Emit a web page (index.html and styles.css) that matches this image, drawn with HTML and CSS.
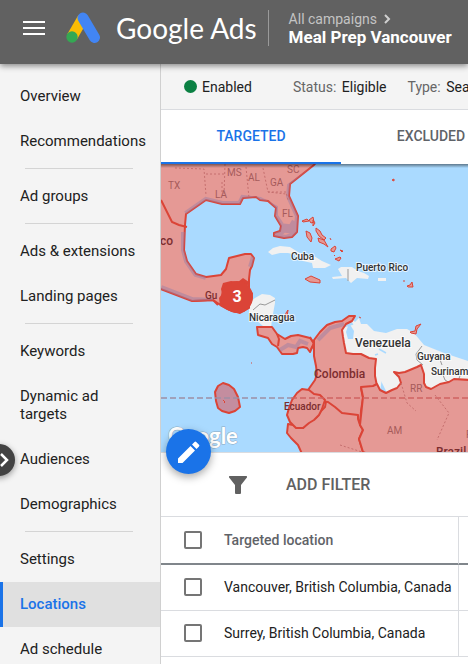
FILE: index.html
```html
<!DOCTYPE html>
<html lang="en">
<head>
  <meta charset="UTF-8" />
  <meta name="viewport" content="width=device-width, initial-scale=1.0" />
  <title>Locations - Google Ads</title>
  <link rel="stylesheet" href="styles.css">
</head>
<body>
  <header class="topbar">
    <button class="menu-btn" type="button" aria-label="Main menu">
      <svg width="22" height="14" viewBox="0 0 22 14"><path d="M0 1h22M0 7h22M0 13h22" stroke="#fff" stroke-width="2"/></svg>
    </button>
    <a class="brand" href="#">
      <svg width="34" height="32" viewBox="0 0 34 32">
        <path d="M17 6L6 25" stroke="#fbbc04" stroke-width="11" />
        <path d="M17 6l11.500 19.500" stroke="#4285f4" stroke-width="11" stroke-linecap="round"/>
        <circle cx="6" cy="25" r="5.700" fill="#34a853"/>
      </svg>
      <span class="brand-name">Google Ads</span>
    </a>
    <div class="crumbs">
      <a class="crumb-parent" href="#">All campaigns
        <svg width="7" height="10" viewBox="0 0 7 10"><path d="M1 1l4 4-4 4" fill="none" stroke="#d0d0d0" stroke-width="2"/></svg>
      </a>
      <strong class="crumb-current">Meal Prep Vancouver</strong>
    </div>
  </header>

  <div class="layout">
    <nav class="sidebar">
      <a href="#">Overview</a>
      <a href="#">Recommendations</a>
      <hr>
      <a href="#">Ad groups</a>
      <hr>
      <a href="#">Ads &amp; extensions</a>
      <a href="#">Landing pages</a>
      <hr>
      <a href="#">Keywords</a>
      <a href="#">Dynamic ad targets</a>
      <a href="#">Audiences</a>
      <a href="#">Demographics</a>
      <hr>
      <a href="#">Settings</a>
      <a href="#" class="active">Locations</a>
      <a href="#">Ad schedule</a>
      <button class="nav-toggle" type="button" aria-label="Expand navigation">
        <svg width="9" height="14" viewBox="0 0 9 14"><path d="M1 1l6 6-6 6" fill="none" stroke="#fff" stroke-width="2.500"/></svg>
      </button>
    </nav>

    <main class="content">
      <div class="status">
        <span class="enabled"><i class="dot"></i>Enabled</span>
        <span class="pair"><span class="key">Status:</span> Eligible</span>
        <span class="pair"><span class="key">Type:</span> Search</span>
      </div>

      <div class="tabs">
        <button class="tab selected" type="button">TARGETED</button>
        <button class="tab" type="button">EXCLUDED</button>
      </div>

      <div class="map-wrap">
        <svg class="map" viewBox="161 164 307 288" preserveAspectRatio="xMinYMin slice">
          <defs>
            <linearGradient id="edge" x1="0" y1="0" x2="0" y2="1">
              <stop offset="0" stop-color="#000" stop-opacity=".45"/>
              <stop offset="1" stop-color="#000" stop-opacity="0"/>
            </linearGradient>
            <clipPath id="north"><path d="M158 160H318L314 165 290 184 289 196 298 216 297 232 292 237 284 238 274 236 274 233 280 231 281 226 275 216 276 208 268 201 260 200 256 197 243 198 240 204 222 204 206 200 186 214 185 225 184 250 187 261 196 274 206 277 221 275 226 269 229 258 245 254 251 254 254 258 252 266 250 270 249 279 249 308 240 313 230 310 219 304 213 300 192 301 158 288Z"/></clipPath>
          </defs>
          <rect x="161" y="164" width="307" height="288" fill="#aadaff"/>

          <!-- land that is not targeted -->
          <g fill="#f1f1f1">
            <path d="M268 252l5-4 7-2 10 1 8 5 9 5 7-1 8 5 9 4-6 3-12 0-1-5-9-2-6-6-9-2-8 0-8 2z"/>
            <path d="M338 269l3-2 11 0 6 4 6 2 5 3-1 3-11-1-6 5-5-5-13 1-1-2 10-1z"/>
            <path d="M378 278h8v3h-8z"/>
            <path d="M249 303l6-5 7-4 8 1 5 3 0 5-3 16-1 9-8-2-14-12z"/>
            <path d="M349 316l6 6 4-4 2 6 6 0 7 7 12 2 11-4 10 0 7 4 10 12 20 8 27 9v25l-82 10z"/>
            <path d="M342 328l14-4 30 26-6 42-40-30z"/>
          </g>
          <path d="M349 323l5 8-1 8-5 0-2-7z" fill="#aadaff"/>
          <path d="M386 353l-7-4M378 354l-3 1" stroke="#aadaff" stroke-width="1.500"/>
          <path d="M253 310l7-6 5 1 10-5M422 346l-6 8 1 6 6 5M439 357l3 8M441 370l4 10 5 3M463 368l-5 13M348 269v12" fill="none" stroke="#999"/>

          <!-- targeted countries -->
          <g class="target">
            <path d="M158 160H318L314 165 290 184 289 196 298 216 297 232 292 237 284 238 274 236 274 233 280 231 281 226 275 216 276 208 268 201 260 200 256 197 243 198 240 204 222 204 206 200 186 214 185 225 184 250 187 261 196 274 206 277 221 275 226 269 229 258 245 254 251 254 254 258 252 266 250 270 249 279 249 308 240 313 230 310 219 304 213 300 192 301 158 288Z"/>
            <path d="M257 327h15l5 7 8 5 6-3 7-1 8 2 4 1 4 5-4 9-3-4-4-1-5 1-1 5-4 1-11 0-5-7-5-3-4-6-10-3z"/>
            <path d="M293 425l-5-1-1 9 4 5 7 7 5 11H382L363 452 359 439 363 430 360 425 359 405 341 405 327 396 325 407 321 411 317 417 309 422 303 428z"/>
            <path d="M314 340l6-8 7-7 8-3 7-1 7-5 6 0-3 5-6 3-4 6 1 7 1 6 2 10 7 1 8 0 8 4 7 1-1 9 0 8 2 10-4 2-12 0 1 5 1 5-2 13-1 14-2-6 0-4-8-1-8-1-7-6-7-5-7-1-6-5-7-1 0-5 7-10 2-6-1-8-2-10z"/>
            <path d="M302 389l-5 4-5 7-3 8-2 7 3 7 3 3 3 3 7 0 6-5 5-3 5-5 3-6 3-9-5-5-6-1-5-4z"/>
            <path d="M361 387l12-1 4-2 3 6 6 3 6-3 5-2 4-5-2-6-5-5 5 1 6-1 12-5 4-2 3 9 0 9 2 4 5 2 9-5 9-2 5-3 16 1V460H383L363 452 359 439 363 430 360 425 363 397z"/>
            <path d="M215 392l3-6 5-3 6 2 5 4 4 8 2 10-5 4-6 2-7-2-4-3-2-7z" class="offshore"/>
          </g>
          <path d="M161 200l11 22 7 3 8 2M192 301l21-1 5 5M277 334l2 5-1 7M310 337l4 7-3 5" fill="none" stroke="#db4437" stroke-width="2"/>
          <g clip-path="url(#north)" fill="none" stroke="#9c7fa5" stroke-width="6" opacity=".5">
            <path d="M318 166l-28 20-1 10 9 20-2 18-10 4-12-2M281 225l-6-9 0-8-15-8-17-2-3 6-18 0-16-4-20 14M184 232v18l3 11 9 13 10 3M161 288l31 12 21 1M254 257l-3 10"/>
            <path d="M277 234l6-6 9 1 4-7" stroke-width="9"/>
          </g>
          <path d="M280 350l8-5 8 2 4-6 8 3M318 340l12-12 14-4" fill="none" stroke="#9c7fa5" stroke-width="4" opacity=".5"/>

          <!-- island groups -->
          <g class="target isles">
            <path d="M302 221l5-2 2 2-6 1zM309 220l4-3 1 5-3 1zM306 231l4 2 2 5-1 4-4-5zM313 220l2 3-2 3zM316 228l4 3 2 4 4 3-2 2-5-4-3-5zM318 238l6 2 4 7-4-3-5-2zM330 238l1 2M331 249l4-3 1 2-2 4-3-1zM334 255l1 1M340 250l3 1-1 1zM335 259l5-2 1 1-2 3zM305 279l6-3 9 4 0 3-10-1zM392 180l2-1v2zM403 281l2 0M407 286l3-1 2-3 1 5-5 0zM410 332l5-1 1-5 5-2-4 5-1 5-5-1zM359 317l2 1M286 313l2-3-1 7-2 1zM251 363h1M223 400l2 2-1 1"/>
          </g>

          <path d="M161 398h130" stroke="#9d8ea5" stroke-width="1.500" stroke-dasharray="6 3"/>
          <path d="M291 398h177" stroke="#cf6361" stroke-width="1.500" stroke-dasharray="6 3"/>
          <g fill="none" stroke="#c56f6e" stroke-dasharray="2 2">
            <path d="M175 168l29 1 2 26M206 174h18M225 164l-1 32M246 167l3 31M263 168l5 24 18 2M222 182v12M268 192h18l2 8M401 383l6 20 9 8M435 395l14 18-12 27M340 445l22 7"/>
          </g>

          <!-- place names -->
          <g class="state">
            <text x="168" y="189">TX</text>
            <text x="227" y="176">MS</text>
            <text x="248" y="181">AL</text>
            <text x="270" y="186">GA</text>
            <text x="287" y="173">SC</text>
            <text x="215" y="198">LA</text>
            <text x="282" y="217">FL</text>
            <text x="410" y="392">RR</text>
            <text x="387" y="434">AM</text>
            <text x="466" y="438">P</text>
          </g>
          <g class="country">
            <text x="291" y="260">Cuba</text>
            <text x="356" y="271">Puerto Rico</text>
            <text x="249" y="321">Nicaragua</text>
            <text x="417" y="360">Guyana</text>
            <text x="431" y="375">Suriname</text>
            <text x="355" y="347" class="large">Venezuela</text>
          </g>
          <g class="country tinted">
            <text x="160" y="245" class="large">co</text>
            <text x="205" y="299">Gu</text>
            <text x="314" y="378" class="large">Colombia</text>
            <text x="284" y="410">Ecuador</text>
            <text x="436" y="456" class="large">Brazil</text>
          </g>
          <path d="M223 283l8-2 7 1 5-4 6 4-2 5 6 6-1 8-3 7-5 4-7 1-10-3-7-4-1-8 3-4-1-5z" fill="#db4437"/>
          <circle cx="237" cy="297" r="16" fill="#db4437"/>
          <text x="237" y="302" class="count">3</text>
          <text x="168" y="444" class="watermark">Google</text>
          <rect x="161" y="164" width="307" height="4" fill="url(#edge)"/>
        </svg>
        <button class="fab" type="button" aria-label="Edit locations">
          <svg width="22" height="22" viewBox="0 0 22 22" fill="#fff"><path d="M0 17.500V22h4.500L17 9.500 12.500 5zM21 5.500a1.200 1.200 0 0 0 0-1.700L18.200 1a1.200 1.200 0 0 0-1.700 0L14 3.500 18.500 8z"/></svg>
        </button>
      </div>

      <div class="filter">
        <svg width="18" height="18" viewBox="0 0 18 18" fill="#616161"><path d="M1 0h16q2 0 .5 2L12 9v8q0 1-1 1H7q-1 0-1-1V9L.5 2Q-1 0 1 0z"/></svg>
        <button class="filter-btn" type="button">ADD FILTER</button>
      </div>

      <table class="locations">
        <thead>
          <tr>
            <th class="check"><input type="checkbox" aria-label="Select all locations"></th>
            <th class="name">Targeted location</th>
            <th></th>
          </tr>
        </thead>
        <tbody>
          <tr>
            <td class="check"><input type="checkbox" id="loc1"></td>
            <td class="name"><label for="loc1">Vancouver, British Columbia, Canada</label></td>
            <td></td>
          </tr>
          <tr>
            <td class="check"><input type="checkbox" id="loc2"></td>
            <td class="name"><label for="loc2">Surrey, British Columbia, Canada</label></td>
            <td></td>
          </tr>
        </tbody>
      </table>
    </main>
  </div>
</body>
</html>
```
FILE: styles.css
```css
:root {
  --bar: #616161;
  --panel: #f4f4f4;
  --line: #dadce0;
  --text: #212121;
  --muted: #5f6368;
  --accent: #1a73e8;
  --target: #db4437;
}

* {
  box-sizing: border-box;
}

body {
  margin: 0;
  height: 100vh;
  display: flex;
  flex-direction: column;
  overflow: hidden;
  font-family: Roboto, sans-serif;
  font-size: 14px;
  color: var(--text);
  background: #fff;
}

a {
  color: inherit;
  text-decoration: none;
}

button {
  font: inherit;
  color: inherit;
  background: none;
  border: none;
  padding: 0;
  cursor: pointer;
}

/* top bar */
.topbar {
  flex: none;
  height: 64px;
  display: flex;
  align-items: center;
  padding: 0 0 8px 23px;
  background: var(--bar);
  color: #fff;
  box-shadow: 0 2px 6px rgba(0,0,0,0.45);
  position: relative;
  z-index: 2;
  white-space: nowrap;
}

.menu-btn,
.menu-btn svg,
.brand svg {
  display: block;
}

.brand {
  display: flex;
  align-items: center;
  gap: 16px;
  margin-left: 21px;
}

.brand-name {
  font-family: Lato, sans-serif;
  font-size: 28px;
  line-height: 32px;
}

.crumbs {
  display: flex;
  flex-direction: column;
  margin-left: 11px;
  padding-left: 20px;
  border-left: 1px solid #9a9a9a;
}

.crumb-parent {
  line-height: 18px;
  color: #c4c4c4;
}

.crumb-parent svg {
  margin-left: 4px;
}

.crumb-current {
  font-size: 17px;
  line-height: 18px;
}

.layout {
  flex: 1;
  display: flex;
  min-height: 0;
}

/* left navigation */
.sidebar {
  flex: none;
  width: 161px;
  padding-top: 10px;
  background: var(--panel);
  border-right: 1px solid #d0d0d0;
  position: relative;
}

.sidebar a {
  display: block;
  padding: 13px 12px 14px 20px;
  font-size: 15px;
  line-height: 18px;
}

.sidebar hr {
  height: 1px;
  margin: 4px 27px 5px 25px;
  border: none;
  background: #d4d4d4;
}

.sidebar .active {
  padding-left: 17px;
  border-left: 3px solid var(--accent);
  background: #e0e0e0;
  color: var(--accent);
  font-weight: 500;
}

.nav-toggle {
  position: absolute;
  left: -17px;
  top: 380px;
  width: 32px;
  height: 32px;
  padding-left: 17px;
  border-radius: 50%;
  background: #424242;
  box-shadow: 0 2px 6px rgba(0,0,0,0.4);
}

.nav-toggle svg {
  display: block;
}

.content {
  flex: 1;
  min-width: 0;
  overflow: hidden;
}

.status {
  height: 46px;
  display: flex;
  align-items: center;
  padding-left: 23px;
  background: var(--panel);
  border-bottom: 1px solid var(--line);
  white-space: nowrap;
}

.enabled {
  display: flex;
  align-items: center;
  gap: 5px;
  margin-right: 41px;
}

.dot {
  width: 13px;
  height: 13px;
  border-radius: 50%;
  background: #0b8043;
}

.pair {
  margin-right: 21px;
}

.key {
  margin-right: 2px;
  color: #666;
}

/* tabs */
.tabs {
  height: 54px;
  display: flex;
}

.tab {
  flex: none;
  width: 180px;
  border-bottom: 2px solid transparent;
  font-weight: 500;
  color: var(--muted);
}

.tab.selected {
  color: var(--accent);
  border-color: var(--accent);
}

/* map */
.map-wrap {
  position: relative;
  border-bottom: 1px solid var(--line);
}

.map {
  display: block;
  width: 100%;
  height: 288px;
}

.target {
  fill: #e59995;
  stroke: var(--target);
  stroke-width: 2;
  stroke-linejoin: round;
}

.offshore {
  fill: #c48d9f;
}

.isles {
  stroke-width: 1;
}

.state {
  font-size: 10px;
  fill: #a55b5b;
}

.country {
  font-size: 10px;
  font-weight: 500;
  fill: #333;
  stroke: #fff;
  stroke-width: 2;
  stroke-opacity: 0.7;
  paint-order: stroke;
}

.country .large {
  font-size: 12px;
}

.country.tinted {
  fill: #7c2d2f;
  stroke: none;
}

.count {
  font-size: 16px;
  font-weight: 700;
  fill: #fff;
  text-anchor: middle;
}

.watermark {
  font-family: Lato, sans-serif;
  font-size: 22px;
  font-weight: 700;
  fill: #fff;
  stroke: #8ca9c0;
  stroke-width: 1;
  paint-order: stroke;
}

.fab {
  position: absolute;
  left: 5px;
  bottom: -22px;
  width: 45px;
  height: 45px;
  display: grid;
  place-items: center;
  border-radius: 50%;
  background: var(--accent);
  box-shadow: 0 3px 8px rgba(0,0,0,0.35);
}

/* filter row */
.filter {
  height: 64px;
  display: flex;
  align-items: center;
  gap: 39px;
  padding-left: 68px;
  border-bottom: 1px solid var(--line);
}

.filter-btn {
  font-size: 16px;
  font-weight: 500;
  color: #616161;
}

/* locations table */
.locations {
  width: 100%;
  border-collapse: separate;
  border-spacing: 0;
  white-space: nowrap;
}

.locations th,
.locations td {
  height: 46px;
  padding: 0 0 1px;
  text-align: left;
  border-bottom: 1px solid var(--line);
}

.locations th {
  height: 48px;
  padding: 0;
  font-weight: 500;
  color: var(--muted);
  border-bottom: 2px solid #80868b;
}

.locations .check {
  width: 63px;
  padding-left: 23px;
}

.locations .name {
  width: 235px;
  border-right: 1px solid var(--line);
}

.locations input {
  appearance: none;
  display: block;
  width: 18px;
  height: 18px;
  margin: 0;
  border: 2px solid #757575;
  border-radius: 2px;
}

.locations input:checked {
  background: var(--accent);
}
```
